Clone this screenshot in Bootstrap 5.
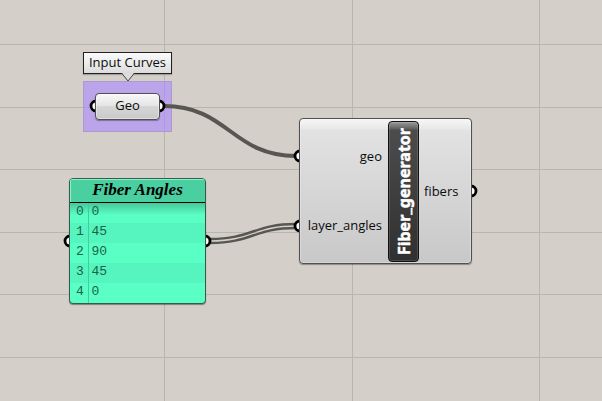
<!DOCTYPE html>
<html lang="en">
<head>
<meta charset="utf-8">
<meta name="viewport" content="width=device-width, initial-scale=1">
<title>Fiber generator graph</title>
<link href="https://cdn.jsdelivr.net/npm/bootstrap@5.3.0/dist/css/bootstrap.min.css" rel="stylesheet">
<style>
body { background: #d4cfc8; }
.graph { font: 13px/20px "Open Sans", "Noto Sans", sans-serif; color: #0c0c0c; }
.layer { pointer-events: none; }
.grid-lines { stroke: #b9b6ae; stroke-width: 1; }
.wire { fill: none; stroke: #575650; }
.port { fill: #fff; stroke: #000; stroke-width: 2.8; }
.node { position: absolute; border: 1px solid #505050; border-radius: 4px; }
.group-area { position: absolute; left: 83px; top: 81px; width: 89px; height: 51px; background: rgba(170, 135, 255, .6); border: 1px solid #ab9ad0; }
.callout { position: absolute; left: 83px; top: 52px; width: 89px; height: 22px; padding-bottom: 2px; border: 1px solid #222; background: linear-gradient(#fbfbfb, #dcdcdc); box-shadow: 0 1px 1px #77777788; }
.callout-tip { position: absolute; left: 37px; top: 19px; }
.geo-node { left: 95px; top: 93px; width: 65px; height: 27px; padding-bottom: 3px; background: linear-gradient(#f8f8f8, #e4e4e4 49%, #d6d6d6 50%, #c9c9c9); box-shadow: inset 0 0 0 1px #ffffff66, 0 1px 1px #00000055; }
.panel-node { left: 69px; top: 178px; width: 137px; height: 126px; background: #5affc6; border-color: #345c4d; box-shadow: 0 1px 1px #00000066; }
.panel-title { height: 24px; font: italic bold 17px/22px "Liberation Serif", serif; color: #000; background: #49cfa0; border-bottom: 1px solid #000; box-shadow: inset 1px 1px 0 #8ef0cd; }
.panel-list { font: 13px/18px "Liberation Mono", monospace; color: #1b6348; background: linear-gradient(#00000038, #0000 12px); }
.panel-list th, .panel-list td { height: 20px; padding: 0 0 2px 3px; vertical-align: middle; font-weight: 400; }
.panel-list th { width: 18px; padding-left: 6px; border-right: 1px solid #41cda0; }
.panel-list tr:nth-child(even) { background: #56f4be; }
.fiber-node { left: 299px; top: 118px; width: 173px; height: 146px; padding: 2px 0 1px; background: linear-gradient(#f7f7f7, #e8e8e8 10px, #e2e2e2 11px, #c8c8c8); box-shadow: inset 0 0 0 1px #ffffff44, 0 1px 1px #00000055; }
.side-in { width: 88px; padding: 0 6px 2px 0; }
.side-out { padding: 0 0 2px 5px; }
.name-bar { width: 31px; border: 1px solid #111; border-radius: 4px; background: linear-gradient(#9a9a9a, #5f5f5f 7px, #4c4c4c 8px, #303030); box-shadow: inset 0 0 0 1px #ffffff22; }
.name-text { writing-mode: vertical-rl; transform: rotate(180deg); font: 700 16px/22px "Noto Sans", "Open Sans", sans-serif; color: #fff; -webkit-text-stroke: .5px #fff; }
</style>
<script src="https://cdn.jsdelivr.net/npm/bootstrap@5.3.0/dist/js/bootstrap.bundle.min.js"></script>
</head>
<body>
<main class="graph position-relative min-vh-100 w-100 overflow-hidden">
  <svg class="layer position-absolute top-0 start-0 w-100 h-100" aria-hidden="true">
    <g class="grid-lines" shape-rendering="crispEdges">
      <line x1="0" x2="100%" y1="44" y2="44"/><line x1="0" x2="100%" y1="107" y2="107"/>
      <line x1="0" x2="100%" y1="169" y2="169"/><line x1="0" x2="100%" y1="232" y2="232"/>
      <line x1="0" x2="100%" y1="294" y2="294"/><line x1="0" x2="100%" y1="357" y2="357"/>
      <line y1="0" y2="100%" x1="164" x2="164"/><line y1="0" y2="100%" x1="352" x2="352"/>
      <line y1="0" y2="100%" x1="539" x2="539"/>
    </g>
  </svg>

  <div class="group-area"></div>

  <svg class="layer position-absolute top-0 start-0 w-100 h-100" aria-hidden="true">
    <path class="wire" stroke-width="4" d="M164 106C228 106 232 156 296 156"/>
    <path class="wire" stroke-width="2.4" d="M210 239C252 239 254 224 296 224M210 243C252 243 254 228 296 228"/>
    <g class="port">
      <circle cx="96" cy="106" r="5"/><circle cx="159" cy="106" r="5"/>
      <circle cx="70" cy="241" r="5"/><circle cx="205" cy="241" r="5"/>
      <circle cx="300" cy="156" r="5"/><circle cx="300" cy="226" r="5"/>
      <circle cx="471" cy="191" r="5"/>
    </g>
  </svg>

  <div class="callout d-flex align-items-center justify-content-center text-nowrap">
    Input Curves
    <svg class="callout-tip" width="14" height="10" viewBox="0 0 14 10" aria-hidden="true">
      <path d="M0 0H14L7 9Z" fill="#dcdcdc"/><path d="M.5 1L7 9L13.500 1" fill="none" stroke="#444"/>
    </svg>
  </div>

  <div class="node geo-node d-flex align-items-center justify-content-center">Geo</div>

  <section class="node panel-node overflow-hidden">
    <h2 class="panel-title text-center m-0">Fiber Angles</h2>
    <table class="panel-list w-100">
      <tbody>
        <tr><th scope="row">0</th><td>0</td></tr>
        <tr><th scope="row">1</th><td>45</td></tr>
        <tr><th scope="row">2</th><td>90</td></tr>
        <tr><th scope="row">3</th><td>45</td></tr>
        <tr><th scope="row">4</th><td>0</td></tr>
      </tbody>
    </table>
  </section>

  <section class="node fiber-node d-flex">
    <div class="side-in d-flex flex-column justify-content-around text-end">
      <span>geo</span>
      <span>layer_angles</span>
    </div>
    <div class="name-bar d-flex align-items-center justify-content-center"><span class="name-text">Fiber_generator</span></div>
    <div class="side-out d-flex align-items-center">fibers</div>
  </section>
</main>
</body>
</html>
